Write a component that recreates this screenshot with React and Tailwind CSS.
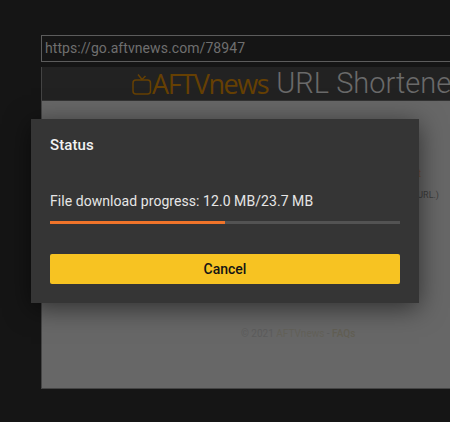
import React from 'react';

// Logo da TV desenhado em SVG
function TvIcon() {
	return (
		<svg width="20" height="25" viewBox="0 0 20 25" fill="none" stroke="#664003" strokeWidth="1.5" className="shrink-0">
			<rect x="1" y="9" width="17.5" height="14" rx="3" />
			<path d="M6 3.5 L10 8.5 L13.5 5" />
		</svg>
	);
}

function StatusDialog() {
	return (
		<div className="absolute left-[31px] top-[119px] w-[388px] h-[184px] bg-[#353535] shadow-[0_5px_24px_rgba(0,0,0,0.55)] px-[19px] flex flex-col">
			<div className="text-[15px] leading-5 font-medium tracking-[0.1px] text-[#f2f2f2] mt-4">Status</div>
			<div className="text-[14px] leading-5 tracking-[0.06px] text-[#e6e6e6] mt-[36px]">File download progress: 12.0 MB/23.7 MB</div>
			<div className="h-[3px] bg-[#535353] mt-[10px]">
				<div className="h-full w-1/2 bg-[#f0742a]"></div>
			</div>
			<button className="h-[30px] mt-[30px] w-full rounded-[2px] bg-[#f7c322] text-[14px] font-medium text-[#141414]">
				Cancel
			</button>
		</div>
	);
}

export default function App() {
	return (
		<div className="relative w-[450px] h-[422px] overflow-hidden bg-[#151515] font-['Roboto',sans-serif]">
			<div className="pl-[41px] pt-[35px] flex flex-col">
				{/* Barra de endereço */}
				<div className="h-[27px] border border-r-0 border-[#5c5c5c] pl-[3px] flex items-center text-[14px] tracking-[0.07px] text-[#6f6f6f]">
					https://go.aftvnews.com/78947
				</div>

				{/* Página carregada */}
				<div className="mt-[5px] h-[322px] w-[409px] flex flex-col bg-[#676767] border-b border-l border-[#444444] overflow-hidden">
					<div className="h-[34px] shrink-0 bg-[#222222] border-b border-[#333333] flex items-center pl-[90px] whitespace-nowrap">
						<TvIcon />
						<span className="text-[27px] leading-none text-[#664003] font-['Open_Sans',sans-serif] tracking-[-1.4px]">AFTVnews</span>
						<span className="text-[29px] leading-none font-light text-[#6a6a6a] ml-[8px]">URL Shortener</span>
					</div>
					<div className="flex flex-col items-end pt-[68px] text-[9px] text-[#3d3d3d]">
						<span className="h-[10px] leading-[10px] pr-[29px] text-[10px] text-[#6e5238]">t</span>
						<span className="mt-[10px] pr-[11px]">URL.)</span>
					</div>
					<div className="mt-[123px] pl-[199px] text-[10px] text-[#5c5c5c] whitespace-nowrap">
						© 2021 <span className="text-[#636159]">AFTVnews</span> - <span className="font-medium text-[#625f54]">FAQs</span>
					</div>
				</div>
			</div>

			<StatusDialog />
		</div>
	);
}
